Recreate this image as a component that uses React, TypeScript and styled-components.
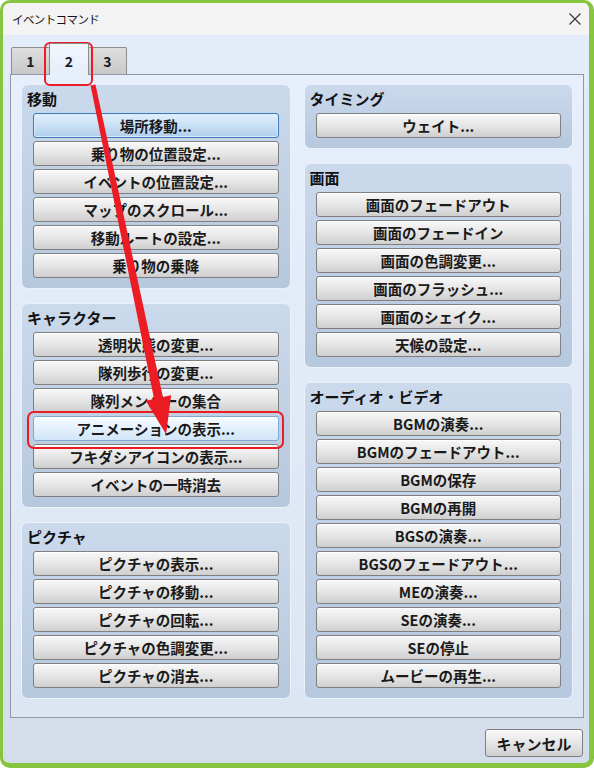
import React from "react";
import styled, { createGlobalStyle, css } from "styled-components";

const GlobalStyle = createGlobalStyle`
  html, body { margin: 0; padding: 0; background: #ffffff; }
  * { box-sizing: border-box; }
  body { font-family: "Noto Sans CJK JP", "Noto Sans", sans-serif; }
`;

const Frame = styled.div`
  position: relative;
  width: 594px;
  height: 768px;
`;

const Window = styled.div`
  width: 594px;
  height: 768px;
  border-style: solid;
  border-color: #86c540;
  border-width: 3px 5px 5px 3px;
  border-radius: 10px;
  overflow: hidden;
  display: flex;
  flex-direction: column;
  background: linear-gradient(#e4eefb, #d4deea);
`;

const TitleBar = styled.div`
  height: 32px;
  flex: none;
  display: flex;
  align-items: center;
  justify-content: space-between;
  padding: 0 8px 0 9px;
  background: #f3f3f3;
`;

const TitleText = styled.span`
  font-size: 11.5px;
  letter-spacing: -0.6px;
  color: #111;
  font-weight: 400;
`;

const CloseIcon = styled.svg`
  width: 12px;
  height: 12px;
  display: block;
`;

const Body = styled.div`
  flex: 1;
  display: flex;
  flex-direction: column;
  padding: 8px 5px 0 7px;
`;

const TabRow = styled.div`
  display: flex;
  align-items: flex-end;
  height: 31px;
  padding-left: 1px;
`;

const Tab = styled.div<{ $active?: boolean }>`
  width: 39px;
  height: 27px;
  display: flex;
  align-items: center;
  justify-content: center;
  font-size: 14px;
  font-weight: 700;
  color: #1c1c1c;
  border: 1px solid #8d8d8d;
  border-bottom: none;
  border-radius: 2px 2px 0 0;
  background: linear-gradient(#dedede, #c8c8c8);
  margin-right: -1px;
  ${(p) =>
    p.$active &&
    css`
      height: 32px;
      margin-bottom: -1px;
      position: relative;
      z-index: 1;
      background: linear-gradient(#f1f6fd, #e5eefa);
      width: 40px;
      padding-top: 2px;
    `}
`;

const TabPanel = styled.div`
  height: 644px;
  flex: none;
  border: 1px solid #8e99a6;
  background: linear-gradient(#e6effb, #dce6f2);
  padding: 9px 10px 0 10px;
  display: grid;
  grid-template-columns: 1fr 1fr;
  column-gap: 13px;
  align-items: start;
`;

const Column = styled.div`
  display: flex;
  flex-direction: column;
  gap: 14px;
`;

const Group = styled.section`
  border: 1px solid #eaf1fa;
  border-radius: 7px;
  background: linear-gradient(#cbd9ec, #b6c8de);
  padding: 5px 11px 10px 11px;
  display: flex;
  flex-direction: column;
  gap: 3px;
`;

const GroupTitle = styled.h3`
  margin: 0 0 2px -6px;
  height: 18px;
  line-height: 18px;
  font-size: 15px;
  font-weight: 700;
  color: #111;
`;

const CmdButton = styled.button<{ $state?: "focus" | "hover" }>`
  height: 25px;
  width: 100%;
  padding: 0;
  border: 1px solid #7f7f7f;
  border-radius: 3px;
  background: linear-gradient(#f8f8f8, #e6e6e6 50%, #cfcfcf);
  box-shadow: inset 0 1px 0 #ffffff;
  font-family: "Noto Sans CJK JP", "Noto Sans", sans-serif;
  font-size: 14.5px;
  font-weight: 700;
  line-height: 23px;
  color: #1a1a1a;
  text-align: center;
  ${(p) =>
    p.$state === "focus" &&
    css`
      border-color: #3c7ab8;
      box-shadow: inset 0 0 0 1px #d8ebfb;
      background: linear-gradient(#e3f0fc, #c9e0f5 50%, #b0cfec);
    `}
  ${(p) =>
    p.$state === "hover" &&
    css`
      border-color: #7fa8d0;
      background: linear-gradient(#f6fbff, #e4f0fc 50%, #d0e5f8);
    `}
`;

const Footer = styled.div`
  display: flex;
  justify-content: flex-end;
  padding: 11px 1px 0 0;
`;

const DialogButton = styled.button`
  width: 98px;
  height: 28px;
  padding: 0;
  border: 1px solid #7f7f7f;
  border-radius: 3px;
  background: linear-gradient(#f8f8f8, #e6e6e6 50%, #cfcfcf);
  box-shadow: inset 0 1px 0 #ffffff;
  font-family: "Noto Sans CJK JP", "Noto Sans", sans-serif;
  font-size: 15px;
  font-weight: 700;
  color: #1a1a1a;
`;

const Overlay = styled.svg`
  position: absolute;
  left: 0;
  top: 0;
  width: 594px;
  height: 768px;
  pointer-events: none;
`;

type Cmd = { label: string; state?: "focus" | "hover" };
type GroupData = { title: string; items: Cmd[] };

const left: GroupData[] = [
  {
    title: "移動",
    items: [
      { label: "場所移動...", state: "focus" },
      { label: "乗り物の位置設定..." },
      { label: "イベントの位置設定..." },
      { label: "マップのスクロール..." },
      { label: "移動ルートの設定..." },
      { label: "乗り物の乗降" },
    ],
  },
  {
    title: "キャラクター",
    items: [
      { label: "透明状態の変更..." },
      { label: "隊列歩行の変更..." },
      { label: "隊列メンバーの集合" },
      { label: "アニメーションの表示...", state: "hover" },
      { label: "フキダシアイコンの表示..." },
      { label: "イベントの一時消去" },
    ],
  },
  {
    title: "ピクチャ",
    items: [
      { label: "ピクチャの表示..." },
      { label: "ピクチャの移動..." },
      { label: "ピクチャの回転..." },
      { label: "ピクチャの色調変更..." },
      { label: "ピクチャの消去..." },
    ],
  },
];

const right: GroupData[] = [
  { title: "タイミング", items: [{ label: "ウェイト..." }] },
  {
    title: "画面",
    items: [
      { label: "画面のフェードアウト" },
      { label: "画面のフェードイン" },
      { label: "画面の色調変更..." },
      { label: "画面のフラッシュ..." },
      { label: "画面のシェイク..." },
      { label: "天候の設定..." },
    ],
  },
  {
    title: "オーディオ・ビデオ",
    items: [
      { label: "BGMの演奏..." },
      { label: "BGMのフェードアウト..." },
      { label: "BGMの保存" },
      { label: "BGMの再開" },
      { label: "BGSの演奏..." },
      { label: "BGSのフェードアウト..." },
      { label: "MEの演奏..." },
      { label: "SEの演奏..." },
      { label: "SEの停止" },
      { label: "ムービーの再生..." },
    ],
  },
];

function renderGroups(groups: GroupData[]) {
  return groups.map((g) => (
    <Group key={g.title}>
      <GroupTitle>{g.title}</GroupTitle>
      {g.items.map((it) => (
        <CmdButton key={it.label} $state={it.state}>
          {it.label}
        </CmdButton>
      ))}
    </Group>
  ));
}

export default function App() {
  return (
    <>
      <GlobalStyle />
      <Frame>
        <Window>
          <TitleBar>
            <TitleText>イベントコマンド</TitleText>
            <CloseIcon viewBox="0 0 12 12">
              <path d="M0.5 0.5 L11.5 11.5 M11.5 0.5 L0.5 11.5" stroke="#333" strokeWidth="1.1" fill="none" />
            </CloseIcon>
          </TitleBar>
          <Body>
            <TabRow>
              <Tab>1</Tab>
              <Tab $active>2</Tab>
              <Tab>3</Tab>
            </TabRow>
            <TabPanel>
              <Column>{renderGroups(left)}</Column>
              <Column>{renderGroups(right)}</Column>
            </TabPanel>
            <Footer>
              <DialogButton>キャンセル</DialogButton>
            </Footer>
          </Body>
        </Window>
        <Overlay viewBox="0 0 594 768">
          <rect x="45" y="43" width="47" height="42" rx="5" fill="none" stroke="#ec1c24" strokeWidth="2" />
          <rect x="28" y="412" width="255" height="36" rx="6" fill="none" stroke="#ec1c24" strokeWidth="2" />
          <polygon
            points="90.55,85.51 95.45,84.49 162.9,397.08 171.2,395.35 166.1,434.2 145.8,400.65 154.1,398.92"
            fill="#ec1c24"
          />
        </Overlay>
      </Frame>
    </>
  );
}
